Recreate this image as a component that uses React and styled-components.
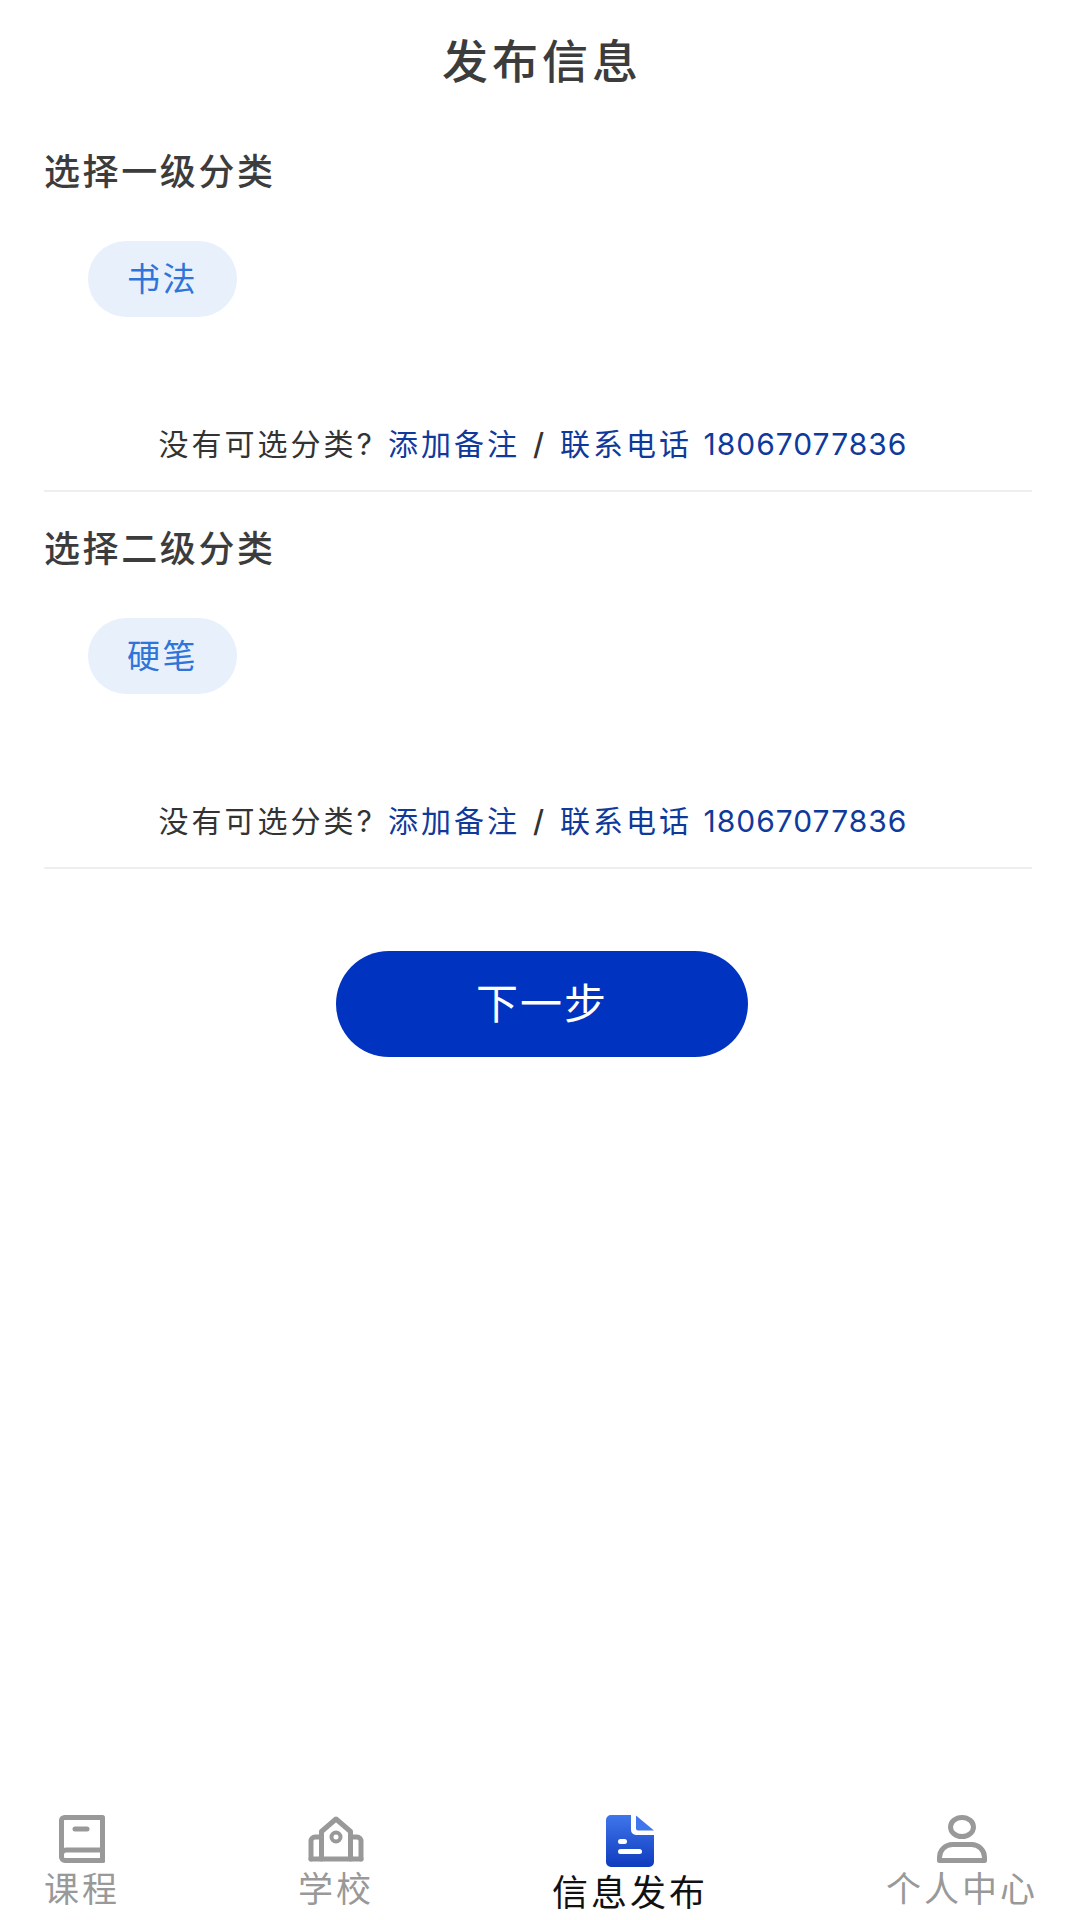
import React from 'react';
import styled, { createGlobalStyle } from 'styled-components';

const GlobalStyle = createGlobalStyle`
  html, body {
    margin: 0;
    padding: 0;
    background: #fff;
    font-family: Inter, "Noto Sans CJK SC", sans-serif;
  }
`;

const BookIcon = () => (
  <svg width="46" height="48" viewBox="0 0 46 48" fill="none" stroke="#999" strokeWidth="5" strokeLinejoin="round" strokeLinecap="round">
    <path d="M5.500 2.500H43.500V35H7a4.500 4.500 0 0 0-4.500 4.500V5.500a3 3 0 0 1 3-3z" />
    <path d="M2.500 39.500V42a3.500 3.500 0 0 0 3.500 3.500H44" />
    <path d="M43.500 35v10" />
    <path d="M16 14h12" />
  </svg>
);

const SchoolIcon = () => (
  <svg width="56" height="46" viewBox="0 0 56 46" fill="none" stroke="#999" strokeWidth="5" strokeLinejoin="round" strokeLinecap="round">
    <path d="M13.500 43V15.500L28 3l14.500 12.500V43" />
    <path d="M13.500 21H7a4 4 0 0 0-4 4V43" />
    <path d="M42.500 21H49a4 4 0 0 1 4 4V43" />
    <path d="M3 43h50" />
    <circle cx="28" cy="21" r="4.500" strokeWidth="4" />
  </svg>
);

const DocIcon = () => (
  <svg width="48" height="52" viewBox="0 0 48 52">
    <defs>
      <linearGradient id="docFill" x1="0" y1="0" x2="0" y2="1">
        <stop offset="0" stopColor="#3f76ec" />
        <stop offset="1" stopColor="#0f3bbd" />
      </linearGradient>
    </defs>
    <path fill="url(#docFill)" d="M5 0h20v15a5 5 0 0 0 5 5h18v27a5 5 0 0 1-5 5H5a5 5 0 0 1-5-5V5a5 5 0 0 1 5-5z" />
    <path fill="#3f76ec" d="M30 0.500L48 15.500H32a2 2 0 0 1-2-2z" />
    <rect x="12" y="24" width="9" height="5" rx="2.500" fill="#fff" />
    <rect x="12" y="34" width="24" height="5" rx="2.500" fill="#fff" />
  </svg>
);

const PersonIcon = () => (
  <svg width="50" height="48" viewBox="0 0 50 48" fill="none" stroke="#999" strokeWidth="5" strokeLinejoin="round">
    <ellipse cx="25" cy="12" rx="11.500" ry="9.500" />
    <path d="M2.500 45.500v-3a13 13 0 0 1 13-13h19a13 13 0 0 1 13 13v3z" />
  </svg>
);

const sections = [
  { id: 1, title: '选择一级分类', option: '书法' },
  { id: 2, title: '选择二级分类', option: '硬笔' },
];

const tabs = [
  { id: 'course', label: '课程', icon: <BookIcon /> },
  { id: 'school', label: '学校', icon: <SchoolIcon /> },
  { id: 'publish', label: '信息发布', icon: <DocIcon />, active: true },
  { id: 'mine', label: '个人中心', icon: <PersonIcon /> },
];

const App = () => {
  return (
    <Page>
      <GlobalStyle />
      <Title>发布信息</Title>
      {sections.map((s) => (
        <Section key={s.id}>
          <SectionTitle>{s.title}</SectionTitle>
          <OptionRow>
            <OptionPill>{s.option}</OptionPill>
          </OptionRow>
          <Hint>
            <span>没有可选分类?</span>
            <HintLink>添加备注</HintLink>
            <Slash>/</Slash>
            <HintLink>联系电话 <Phone>18067077836</Phone></HintLink>
          </Hint>
        </Section>
      ))}
      <NextButton>下一步</NextButton>
      <TabBar>
        {tabs.map((t) => (
          <Tab key={t.id}>
            <TabIcon $active={t.active}>{t.icon}</TabIcon>
            <TabLabel $active={t.active}>{t.label}</TabLabel>
          </Tab>
        ))}
      </TabBar>
    </Page>
  );
};

const Page = styled.div`
  display: flex;
  flex-direction: column;
  width: 1080px;
  height: 1920px;
  overflow: hidden;
  background: #fff;
`;

const Title = styled.h1`
  margin: 0;
  padding: 36px 0 29px 4px;
  font-size: 46px;
  line-height: 50px;
  font-weight: 500;
  letter-spacing: 4px;
  text-align: center;
  color: #3c3c3c;
`;

const Section = styled.section`
  margin: 0 48px 0 44px;
  padding-top: 31px;
  padding-bottom: 26px;
  border-bottom: 2px solid #eeeeee;
`;

const SectionTitle = styled.h2`
  margin: 0;
  padding-top: 1px;
  font-size: 36px;
  line-height: 50px;
  font-weight: 500;
  letter-spacing: 2.600px;
  color: #3c3c3c;
`;

const OptionRow = styled.div`
  display: flex;
  margin-top: 44px;
  padding-left: 44px;
`;

const OptionPill = styled.div`
  display: flex;
  align-items: center;
  justify-content: center;
  width: 149px;
  height: 76px;
  padding-bottom: 5px;
  box-sizing: border-box;
  border-radius: 38px;
  background: #e8f0fc;
  color: #2f74d8;
  font-size: 33px;
  letter-spacing: 2.500px;
`;

const Hint = styled.div`
  display: flex;
  justify-content: center;
  align-items: center;
  gap: 13px;
  margin-top: 107px;
  padding-right: 10px;
  font-size: 30px;
  line-height: 40px;
  letter-spacing: 3px;
  color: #333;
`;

const HintLink = styled.span`
  color: #0f3a9c;
`;

const Phone = styled.span`
  letter-spacing: 1px;
`;

const Slash = styled.span`
  font-weight: 500;
  color: #333;
`;

const NextButton = styled.button`
  align-self: center;
  width: 412px;
  height: 106px;
  margin: 82px 0 0 4px;
  padding: 0 0 8px;
  border: none;
  border-radius: 53px;
  background: #0033bf;
  color: #fff;
  font-family: inherit;
  font-size: 42px;
  letter-spacing: 2px;
`;

const TabBar = styled.nav`
  display: flex;
  justify-content: space-between;
  align-items: flex-start;
  box-sizing: border-box;
  height: 107px;
  margin-top: auto;
  padding: 0 42px 0 44px;
`;

const Tab = styled.div`
  display: flex;
  flex-direction: column;
  align-items: center;
`;

const TabIcon = styled.div`
  display: flex;
  align-items: center;
  justify-content: center;
  height: 52px;
  margin-top: ${(p) => (p.$active ? '2px' : '0')};
`;

const TabLabel = styled.div`
  margin-top: ${(p) => (p.$active ? '4px' : '2px')};
  font-size: ${(p) => (p.$active ? '36px' : '35px')};
  line-height: 44px;
  letter-spacing: 3px;
  color: ${(p) => (p.$active ? '#111' : '#999')};
`;

export default App;
